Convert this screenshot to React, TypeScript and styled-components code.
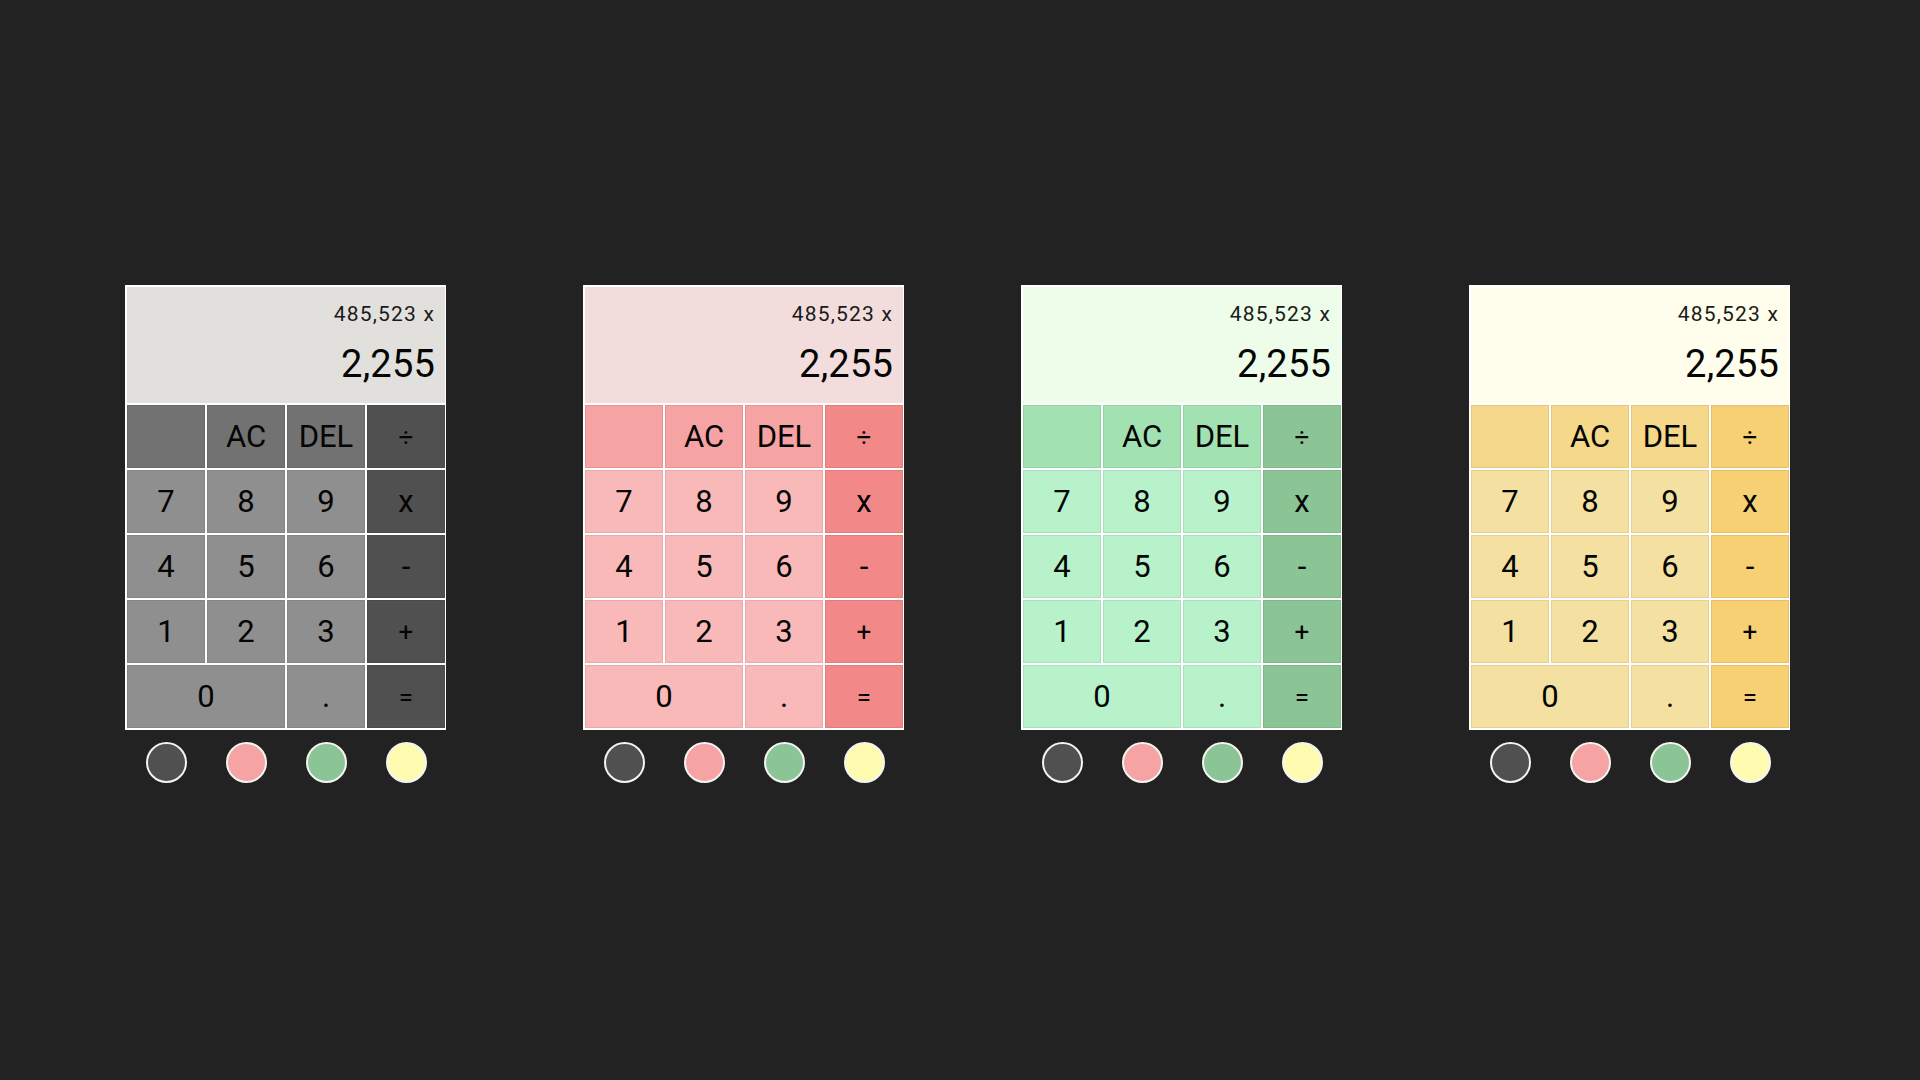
import React from "react";
import styled, { createGlobalStyle } from "styled-components";

const GlobalStyle = createGlobalStyle`
  html, body {
    margin: 0;
    padding: 0;
    background: #222222;
  }
  body {
    font-family: Roboto, "Liberation Sans", sans-serif;
  }
  * { box-sizing: border-box; }
`;

type Theme = {
  display: string;
  top: string;
  op: string;
  num: string;
};

const themes: Theme[] = [
  { display: "#e2e0dc", top: "#727272", op: "#505050", num: "#8f8f8f" },
  { display: "#f2dcdc", top: "#f5a3a3", op: "#f28888", num: "#f8b9b8" },
  { display: "#edfdea", top: "#a2e2b2", op: "#8bc596", num: "#b7f2ca" },
  { display: "#fffeec", top: "#f5d889", op: "#f6d072", num: "#f4e0a0" },
];

const offsets = [0, 137, 117, 127];

const swatches = ["#505050", "#f5a3a3", "#8bc596", "#fefbb0"];

const Page = styled.main`
  width: 1920px;
  height: 1080px;
  display: flex;
  align-items: flex-start;
  padding: 285px 0 0 125px;
  background: #222222;
`;

const Column = styled.section<{ $offset: number }>`
  display: flex;
  flex-direction: column;
  margin-left: ${(p) => p.$offset}px;
`;

const Calculator = styled.div`
  width: 321px;
  display: flex;
  flex-direction: column;
  gap: 2px;
  padding: 2px 1px 2px 2px;
  background: #ffffff;
`;

const Display = styled.div<{ $bg: string }>`
  height: 116px;
  background: ${(p) => p.$bg};
  display: flex;
  flex-direction: column;
  align-items: flex-end;
  padding: 15px 10px 0 0;
  color: #111;
`;

const Expression = styled.div`
  font-size: 21px;
  letter-spacing: 1.2px;
  line-height: 24px;
  color: #1a1a1a;
`;

const Result = styled.div`
  font-size: 38px;
  font-weight: 400;
  letter-spacing: 0.2px;
  line-height: 44px;
  margin-top: 16px;
  color: #050505;
`;

const Keypad = styled.div`
  display: grid;
  grid-template-columns: repeat(4, 78px);
  grid-auto-rows: 63px;
  gap: 2px;
`;

const Key = styled.div<{ $bg: string; $span?: number; $small?: boolean }>`
  grid-column: span ${(p) => p.$span ?? 1};
  background: ${(p) => p.$bg};
  border: 1px solid rgba(0, 0, 0, 0.07);
  display: flex;
  align-items: center;
  justify-content: center;
  font-size: ${(p) => (p.$small ? "26px" : "31px")};
  font-weight: 400;
  color: #050505;
  user-select: none;
`;

const Swatches = styled.div`
  display: grid;
  grid-template-columns: repeat(4, 78px);
  gap: 2px;
  padding: 0 1px 0 2px;
  margin-top: 12px;
  justify-items: center;
`;

const Swatch = styled.div<{ $color: string }>`
  width: 41px;
  height: 41px;
  border-radius: 50%;
  background: ${(p) => p.$color};
  border: 2px solid #f4f4f4;
`;

type KeyDef = { label: string; kind: "top" | "op" | "num"; span?: number; small?: boolean };

const keys: KeyDef[] = [
  { label: "", kind: "top" },
  { label: "AC", kind: "top" },
  { label: "DEL", kind: "top" },
  { label: "÷", kind: "op", small: true },
  { label: "7", kind: "num" },
  { label: "8", kind: "num" },
  { label: "9", kind: "num" },
  { label: "x", kind: "op" },
  { label: "4", kind: "num" },
  { label: "5", kind: "num" },
  { label: "6", kind: "num" },
  { label: "-", kind: "op" },
  { label: "1", kind: "num" },
  { label: "2", kind: "num" },
  { label: "3", kind: "num" },
  { label: "+", kind: "op", small: true },
  { label: "0", kind: "num", span: 2 },
  { label: ".", kind: "num" },
  { label: "=", kind: "op", small: true },
];

function Calc({ theme, offset }: { theme: Theme; offset: number }) {
  return (
    <Column $offset={offset}>
      <Calculator>
        <Display $bg={theme.display}>
          <Expression>485,523 x</Expression>
          <Result>2,255</Result>
        </Display>
        <Keypad>
          {keys.map((k, i) => (
            <Key key={i} $bg={theme[k.kind]} $span={k.span} $small={k.small}>
              {k.label}
            </Key>
          ))}
        </Keypad>
      </Calculator>
      <Swatches>
        {swatches.map((c) => (
          <Swatch key={c} $color={c} />
        ))}
      </Swatches>
    </Column>
  );
}

export default function App() {
  return (
    <>
      <GlobalStyle />
      <Page>
        {themes.map((t, i) => (
          <Calc key={i} theme={t} offset={offsets[i]} />
        ))}
      </Page>
    </>
  );
}
